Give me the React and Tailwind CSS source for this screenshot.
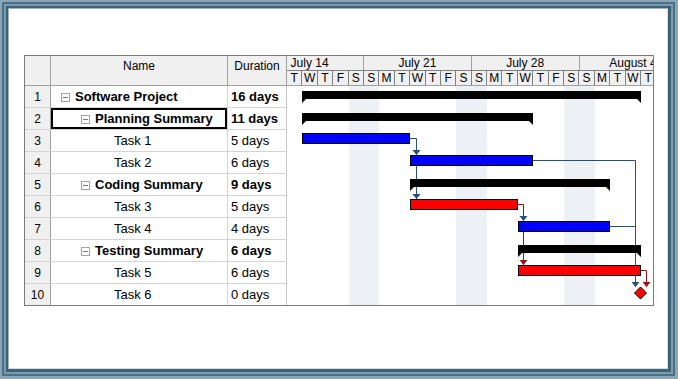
const DAYS = "TWTFSSMTWTFSSMTWTFSSMTWT".split("");
const WEEKS = ["July 14", "July 21", "July 28", "August 4"];

const ROWS = [
  { n: 1, name: "Software Project", dur: "16 days", level: 1, summary: true },
  { n: 2, name: "Planning Summary", dur: "11 days", level: 2, summary: true, selected: true },
  { n: 3, name: "Task 1", dur: "5 days", level: 3 },
  { n: 4, name: "Task 2", dur: "6 days", level: 3 },
  { n: 5, name: "Coding Summary", dur: "9 days", level: 2, summary: true },
  { n: 6, name: "Task 3", dur: "5 days", level: 3 },
  { n: 7, name: "Task 4", dur: "4 days", level: 3 },
  { n: 8, name: "Testing Summary", dur: "6 days", level: 2, summary: true },
  { n: 9, name: "Task 5", dur: "6 days", level: 3 },
  { n: 10, name: "Task 6", dur: "0 days", level: 3 },
];

const BLUE = "#24507f";
const RED = "#9a0f0f";

// pixel x of the start of day column k inside the chart
const dx = (k) => Math.round(15.4 * k);

const TASKS = [
  { row: 2, from: 1, to: 8, fill: "#0000ff" },
  { row: 3, from: 8, to: 16, fill: "#0000ff" },
  { row: 5, from: 8, to: 15, fill: "#ff0000" },
  { row: 6, from: 15, to: 21, fill: "#0000ff" },
  { row: 8, from: 15, to: 23, fill: "#ff0000" },
];

const SUMMARIES = [
  { row: 0, from: 1, to: 23 },
  { row: 1, from: 1, to: 16 },
  { row: 4, from: 8, to: 21 },
  { row: 7, from: 15, to: 23 },
];

function Arrow({ x, y, color }) {
  return <polygon points={`${x - 4},${y - 5} ${x + 4},${y - 5} ${x},${y}`} fill={color} />;
}

function Chart() {
  return (
    <svg width="366" height="219" className="block">
      {[4, 11, 18].map((k) => (
        <rect key={k} x={dx(k)} y="0" width={dx(k + 2) - dx(k)} height="219" fill="#edf1f6" />
      ))}

      {/* links */}
      <g fill="none" strokeWidth="1">
        <path d="M123 52.5 H129.5 V113" stroke={BLUE} />
        <path d="M246 74.5 H348.5 V201" stroke={BLUE} />
        <path d="M323 140.5 H348.5" stroke={BLUE} />
        <path d="M236.5 118.5 V135" stroke={BLUE} />
        <path d="M231 118.5 H236.5 V179" stroke={RED} />
        <path d="M354 184.5 H359.5 V201" stroke={RED} />
      </g>

      {TASKS.map((t) => (
        <rect
          key={t.row}
          x={dx(t.from) + 0.5}
          y={22 * t.row + 3.5}
          width={dx(t.to) - dx(t.from) - 1}
          height="10"
          fill={t.fill}
          stroke="#000"
        />
      ))}

      {SUMMARIES.map((s) => {
        const x1 = dx(s.from);
        const x2 = dx(s.to);
        const t = 22 * s.row + 5;
        return (
          <polygon
            key={s.row}
            points={`${x1},${t} ${x2},${t} ${x2},${t + 12} ${x2 - 4},${t + 8} ${x1 + 4},${t + 8} ${x1},${t + 12}`}
            fill="#000"
          />
        );
      })}

      <Arrow x={129.5} y={69} color={BLUE} />
      <Arrow x={129.5} y={113} color={BLUE} />
      <Arrow x={236.5} y={135} color={BLUE} />
      <Arrow x={236.5} y={179} color={RED} />
      <Arrow x={348.5} y={201} color={BLUE} />
      <Arrow x={359.5} y={201} color={RED} />

      <polygon points="353.5,201 359.5,207 353.5,213 347.5,207" fill="#ff0000" stroke="#000" />
    </svg>
  );
}

function Collapse() {
  return (
    <span className="mr-[5px] flex h-[9px] w-[9px] shrink-0 items-center justify-center border border-[#a3a3a3] bg-white">
      <span className="h-px w-[5px] bg-[#7a7a7a]" />
    </span>
  );
}

function Row({ r, last }) {
  const pad = r.level === 1 ? "pl-[10px]" : r.level === 2 ? "pl-[30px]" : "pl-[63px]";
  return (
    <div className={`flex ${last ? "h-[21px]" : "h-[22px] border-b border-[#d4d4d4]"}`}>
      <div className="flex w-[26px] items-center justify-center border-r border-[#a0a0a0] bg-[#f0f0f0] pt-px text-[12px]">
        {r.n}
      </div>
      <div
        className={`flex w-[177px] items-center border-r border-[#d4d4d4] pt-px ${pad} ${
          r.selected ? "shadow-[inset_0_0_0_2px_#000]" : ""
        }`}
      >
        {r.summary && <Collapse />}
        <span className={r.summary ? "font-bold" : ""}>{r.name}</span>
      </div>
      <div className={`flex w-[59px] items-center border-r border-[#c8c8c8] pl-[3px] pt-px ${r.summary ? "font-bold" : ""}`}>
        {r.dur}
      </div>
    </div>
  );
}

export default function App() {
  return (
    <div className="h-[379px] w-[678px] bg-[#8ba6b7] pb-[3px] pl-[2px] pr-[3px] pt-[2px] font-['Liberation_Sans',Arial,sans-serif] text-black">
      <div className="h-full bg-[#4b6f86] p-[2px]">
        <div className="h-full bg-[#7e9cae] p-[2px]">
          <div className="h-full bg-[#3c6278] pb-[3px] pl-[2px] pr-[3px] pt-[2px]">
            <div className="h-full border border-r-[#d3dde3] border-b-[#d3dde3] border-l-[#9fb3c0] border-t-[#9fb3c0] bg-white pl-[15px] pt-[46px]">
              <div className="flex w-[630px] border border-[#7a7a7a] text-[13px]">
                <div className="flex w-[262px] flex-col">
                  <div className="flex h-[30px] border-b border-[#a0a0a0] bg-[#f0f0f0] text-[12px]">
                    <div className="w-[26px] border-r border-[#a0a0a0]" />
                    <div className="w-[177px] border-r border-[#a0a0a0] pt-[1px] text-center">Name</div>
                    <div className="w-[59px] border-r border-[#a0a0a0] pt-[1px] text-center">Duration</div>
                  </div>
                  {ROWS.map((r, i) => (
                    <Row key={r.n} r={r} last={i === ROWS.length - 1} />
                  ))}
                </div>
                <div className="flex w-[366px] flex-col">
                  <div className="h-[30px] border-b border-[#a0a0a0] bg-[#f0f0f0] text-[12px] leading-[14px]">
                    <div className="flex h-[15px] overflow-hidden border-b border-[#808080]">
                      <div className="-ml-[30.8px] flex">
                        {WEEKS.map((w) => (
                          <div key={w} className="w-[107.8px] shrink-0 border-r border-[#a0a0a0] text-center">
                            {w}
                          </div>
                        ))}
                      </div>
                    </div>
                    <div className="grid h-[14px] grid-cols-[repeat(24,15.4px)] overflow-hidden">
                      {DAYS.map((d, i) => (
                        <div key={i} className="border-r border-[#808080] text-center">
                          {d}
                        </div>
                      ))}
                    </div>
                  </div>
                  <Chart />
                </div>
              </div>
            </div>
          </div>
        </div>
      </div>
    </div>
  );
}
